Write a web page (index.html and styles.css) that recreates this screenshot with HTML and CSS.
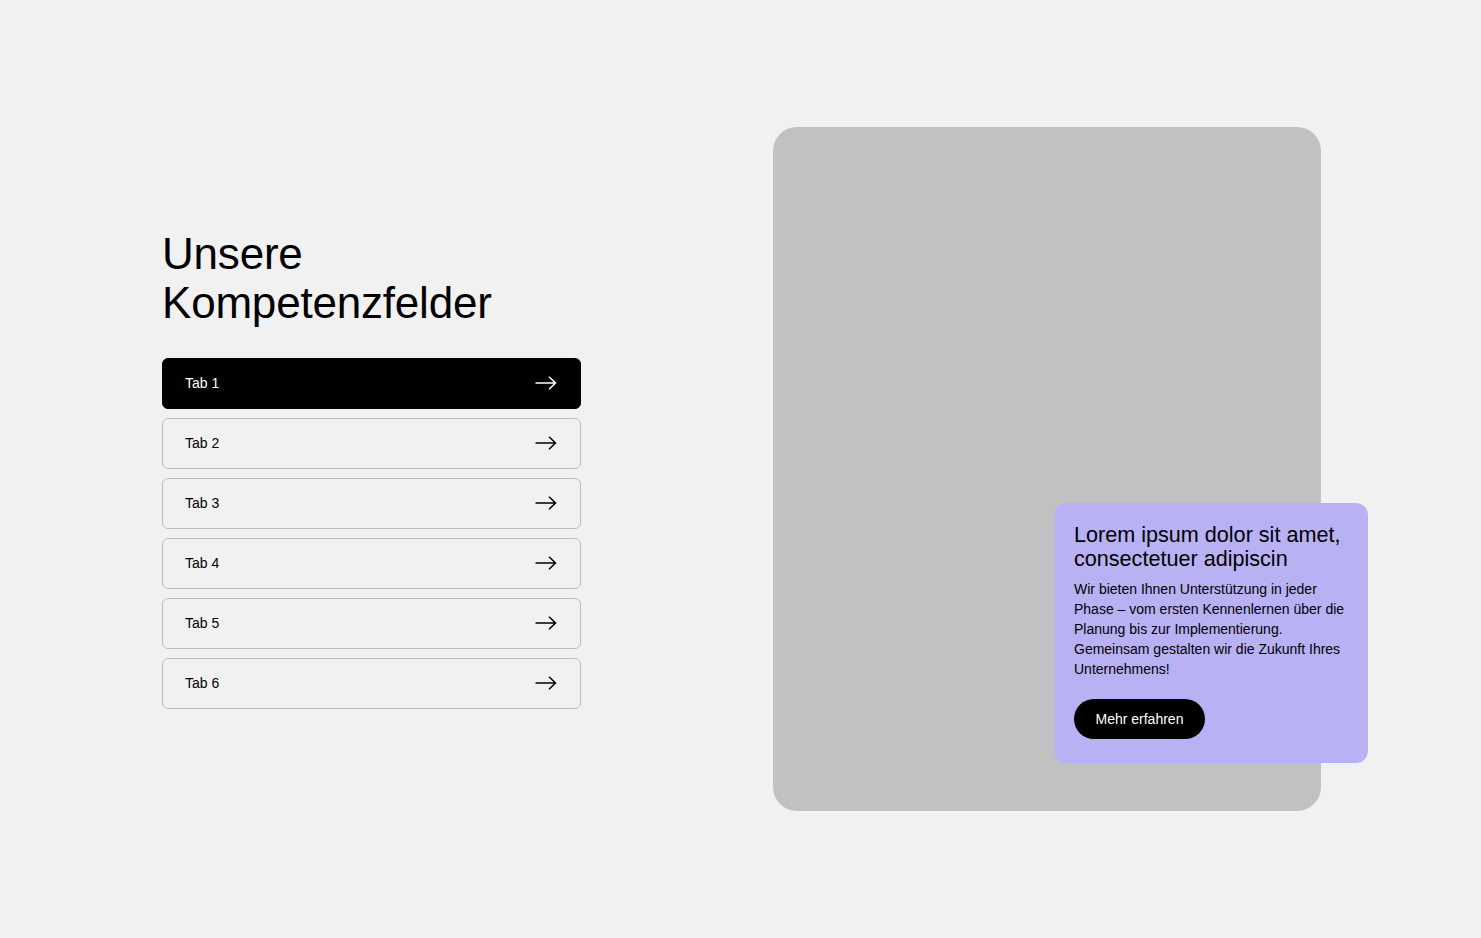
FILE: index.html
```html
<!DOCTYPE html>
<html lang="de">
<head>
<meta charset="utf-8">
<title>Unsere Kompetenzfelder</title>
<link rel="stylesheet" href="styles.css">
</head>
<body>
<main class="page">
  <section class="left">
    <h1 class="title">Unsere<br>Kompetenzfelder</h1>
    <ul class="tabs">
      <li class="tab active"><span>Tab 1</span><svg class="arrow" viewBox="0 0 22 14" width="22" height="14"><path d="M0.5 7H20.5M14 0.8L20.5 7L14 13.2" fill="none" stroke="currentColor" stroke-width="1.5"/></svg></li>
      <li class="tab"><span>Tab 2</span><svg class="arrow" viewBox="0 0 22 14" width="22" height="14"><path d="M0.5 7H20.5M14 0.8L20.5 7L14 13.2" fill="none" stroke="currentColor" stroke-width="1.5"/></svg></li>
      <li class="tab"><span>Tab 3</span><svg class="arrow" viewBox="0 0 22 14" width="22" height="14"><path d="M0.5 7H20.5M14 0.8L20.5 7L14 13.2" fill="none" stroke="currentColor" stroke-width="1.5"/></svg></li>
      <li class="tab"><span>Tab 4</span><svg class="arrow" viewBox="0 0 22 14" width="22" height="14"><path d="M0.5 7H20.5M14 0.8L20.5 7L14 13.2" fill="none" stroke="currentColor" stroke-width="1.5"/></svg></li>
      <li class="tab"><span>Tab 5</span><svg class="arrow" viewBox="0 0 22 14" width="22" height="14"><path d="M0.5 7H20.5M14 0.8L20.5 7L14 13.2" fill="none" stroke="currentColor" stroke-width="1.5"/></svg></li>
      <li class="tab"><span>Tab 6</span><svg class="arrow" viewBox="0 0 22 14" width="22" height="14"><path d="M0.5 7H20.5M14 0.8L20.5 7L14 13.2" fill="none" stroke="currentColor" stroke-width="1.5"/></svg></li>
    </ul>
  </section>
  <section class="right">
    <div class="media"></div>
    <div class="card">
      <h2 class="card-title">Lorem ipsum dolor sit amet, consectetuer adipiscin</h2>
      <p class="card-text">Wir bieten Ihnen Unterstützung in jeder Phase – vom ersten Kennenlernen über die Planung bis zur Implementierung. Gemeinsam gestalten wir die Zukunft Ihres Unternehmens!</p>
      <a class="btn" href="#">Mehr erfahren</a>
    </div>
  </section>
</main>
</body>
</html>
```

FILE: styles.css
```css
* { box-sizing: border-box; }
html, body {
  margin: 0;
  padding: 0;
  background: #f1f1f1;
  font-family: "Liberation Sans", Arial, sans-serif;
  color: #000;
}
.page {
  display: flex;
  align-items: center;
  gap: 192px;
  padding: 127px 0 127px 162px;
  width: 1481px;
  height: 938px;
}
.left {
  width: 419px;
  display: flex;
  flex-direction: column;
  gap: 31px;
  margin-top: -1px;
}
.title {
  margin: 0;
  font-size: 44px;
  line-height: 49px;
  font-weight: 400;
  letter-spacing: -0.2px;
}
.tabs {
  list-style: none;
  margin: 0;
  padding: 0;
  display: flex;
  flex-direction: column;
  gap: 9px;
}
.tab {
  height: 51px;
  border: 1px solid #bdbdbd;
  border-radius: 6px;
  display: flex;
  align-items: center;
  justify-content: space-between;
  padding: 0 23px 0 22px;
  font-size: 14px;
  color: #000;
}
.tab.active {
  background: #000;
  border-color: #000;
  color: #fff;
}
.arrow { display: block; }
.right {
  position: relative;
  width: 548px;
  height: 684px;
}
.media {
  width: 100%;
  height: 100%;
  background: #c1c1c1;
  border-radius: 24px;
}
.card {
  position: absolute;
  right: -47px;
  bottom: 48px;
  width: 314px;
  background: #b8b1f4;
  border-radius: 12px;
  padding: 20px 20px 24px 20px;
}
.card-title {
  margin: 0;
  font-size: 21.6px;
  line-height: 24px;
  font-weight: 400;
}
.card-text {
  margin: 8px 0 20px 0;
  font-size: 14px;
  line-height: 20px;
}
.btn {
  display: inline-flex;
  align-items: center;
  height: 40px;
  padding: 0 21.5px;
  background: #000;
  color: #fff;
  border-radius: 20px;
  font-size: 14px;
  text-decoration: none;
}
```
